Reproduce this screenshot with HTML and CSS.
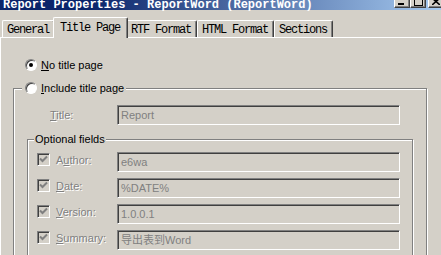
FILE: index.html
```html
<!DOCTYPE html>
<html lang="en">
<head>
    <meta charset="UTF-8">
    <title>Report Properties</title>
    <link rel="stylesheet" href="styles.css">
</head>
<body>

<div class="titlebar">
    <span class="caption">Report Properties - ReportWord (ReportWord)</span>
    <div class="caption-buttons">
        <span class="cap-btn">
            <svg width="8" height="8" viewBox="0 0 8 8"><rect x="0" y="6" width="6" height="2" fill="#000"/></svg>
        </span>
        <span class="cap-btn">
            <svg width="9" height="9" viewBox="0 0 9 9"><rect x="0.5" y="0.5" width="8" height="8" fill="none" stroke="#000"/><rect x="0" y="0" width="9" height="2" fill="#000"/></svg>
        </span>
        <span class="cap-btn cap-close">
            <svg width="8" height="7" viewBox="0 0 8 7"><path d="M0 0 L8 7 M8 0 L0 7" stroke="#000" stroke-width="1.6"/></svg>
        </span>
    </div>
</div>

<div class="tabs">
    <span class="tab">General</span>
    <span class="tab active">Title Page</span>
    <span class="tab">RTF Format</span>
    <span class="tab">HTML Format</span>
    <span class="tab">Sections</span>
</div>

<div class="panel">
    <label class="radio-row">
        <span class="radio checked"></span>
        <span><u>N</u>o title page</span>
    </label>

    <div class="group outer">
        <label class="radio-row group-label">
            <span class="radio"></span>
            <span><u>I</u>nclude title page</span>
        </label>

        <div class="title-row">
            <span class="dis-label"><u>T</u>itle:</span>
            <span class="edit">Report</span>
        </div>

        <div class="group optional">
            <span class="group-label plain">Optional fields</span>

            <div class="field-row">
                <span class="check"><svg width="9" height="9" viewBox="0 0 9 9"><path d="M1 3.5 L3.5 6 L8 1.5" fill="none" stroke="#808080" stroke-width="2"/></svg></span>
                <span class="dis-label">A<u>u</u>thor:</span>
                <span class="edit">e6wa</span>
            </div>
            <div class="field-row">
                <span class="check"><svg width="9" height="9" viewBox="0 0 9 9"><path d="M1 3.5 L3.5 6 L8 1.5" fill="none" stroke="#808080" stroke-width="2"/></svg></span>
                <span class="dis-label"><u>D</u>ate:</span>
                <span class="edit">%DATE%</span>
            </div>
            <div class="field-row">
                <span class="check"><svg width="9" height="9" viewBox="0 0 9 9"><path d="M1 3.5 L3.5 6 L8 1.5" fill="none" stroke="#808080" stroke-width="2"/></svg></span>
                <span class="dis-label"><u>V</u>ersion:</span>
                <span class="edit">1.0.0.1</span>
            </div>
            <div class="field-row">
                <span class="check"><svg width="9" height="9" viewBox="0 0 9 9"><path d="M1 3.5 L3.5 6 L8 1.5" fill="none" stroke="#808080" stroke-width="2"/></svg></span>
                <span class="dis-label"><u>S</u>ummary:</span>
                <span class="edit">导出表到Word</span>
            </div>
        </div>
    </div>
</div>

</body>
</html>
```

FILE: styles.css
```css
body {
    margin: 0;
    width: 441px;
    height: 255px;
    overflow: hidden;
    background-color: #d4d0c8;
    font-family: "Liberation Sans", "Noto Sans CJK SC", sans-serif;
    font-size: 11px;
    color: #000;
}

/* title bar, top of it is cut off */
.titlebar {
    height: 18px;
    margin-top: -8px;
    display: flex;
    justify-content: space-between;
    background: linear-gradient(to right, #0a246a 0%, #0a246a 20%, #a6caf0 100%);
}

.titlebar .caption {
    padding: 6px 0 0 3px;
    line-height: 14px;
    color: white;
    font-family: "Liberation Mono", monospace;
    font-size: 12px;
    font-weight: bold;
    white-space: nowrap;
}

.caption-buttons {
    display: flex;
    padding-top: 2px;
    margin-right: -3px;
}

.cap-btn {
    width: 14px;
    height: 12px;
    display: flex;
    align-items: center;
    justify-content: center;
    background-color: #d4d0c8;
    border: 1px solid;
    border-color: #fff #404040 #404040 #fff;
    box-shadow: inset -1px -1px 0 #808080;
}

.cap-close {
    margin-left: 2px;
}

/* tab strip */
.tabs {
    display: flex;
    align-items: flex-end;
    height: 20px;
    margin-top: 7px;
    padding-left: 2px;
}

.tab {
    height: 14px;
    padding: 2px 5px 0 4px;
    line-height: 14px;
    font-family: "Liberation Mono", monospace;
    font-size: 12px;
    letter-spacing: -1.2px;
    white-space: nowrap;
    border: 1px solid;
    border-bottom: none;
    border-color: #fff #404040 #fff #fff;
    border-radius: 2px 2px 0 0;
    box-shadow: inset -1px 0 0 #808080;
}

.tab.active {
    position: relative;
    height: 17px;
    padding: 3px 7px 0 6px;
    margin: 0 -2px -1px -2px;
    background-color: #d4d0c8;
    z-index: 1;
}

/* tab page */
.panel {
    border-top: 1px solid #fff;
    border-left: 1px solid #fff;
    padding: 20px 0 0 12px;
}

.radio-row {
    display: flex;
    align-items: center;
    height: 14px;
    padding-left: 12px;
}

.radio {
    position: relative;
    width: 10px;
    height: 10px;
    margin-right: 4px;
    border-radius: 50%;
    border: 1px solid;
    border-color: #808080 #fff #fff #808080;
    box-shadow: inset 1px 1px 0 #404040;
    background-color: #fff;
}

.radio.checked::after {
    content: "";
    position: absolute;
    top: 3px;
    left: 3px;
    width: 4px;
    height: 4px;
    border-radius: 50%;
    background-color: #000;
}

/* etched group boxes */
.group {
    position: relative;
    border: 1px solid #808080;
    box-shadow: inset 1px 1px 0 #fff, 1px 1px 0 #fff;
}

.group.outer {
    width: 414px;
    box-sizing: border-box;
    margin-top: 16px;
    padding-top: 16px;
    height: 200px;
}

.group-label {
    position: absolute;
    top: -8px;
    left: 8px;
    padding: 0 2px 0 3px;
    background-color: #d4d0c8;
}

.group-label.plain {
    top: -7px;
    left: 6px;
    padding: 0 1px 0 1px;
    line-height: 13px;
}

.title-row {
    display: grid;
    grid-template-columns: 67px 283px;
    align-items: center;
    padding-left: 36px;
}

.group.optional {
    margin: 14px 13px 0 13px;
    padding: 12px 0 20px 9px;
    display: flex;
    flex-direction: column;
    gap: 6px;
}

.field-row {
    display: grid;
    grid-template-columns: 13px 55px 283px;
    column-gap: 6px;
    align-items: start;
}

.check {
    width: 11px;
    height: 11px;
    margin-top: 1px;
    display: flex;
    align-items: center;
    justify-content: center;
    border: 1px solid;
    border-color: #808080 #fff #fff #808080;
    box-shadow: inset 1px 1px 0 #404040;
    background-color: #d4d0c8;
}

.field-row .dis-label {
    margin-top: 1px;
    line-height: 14px;
}

.field-row .edit {
    grid-column: 3;
}

.dis-label {
    color: #808080;
    text-shadow: 1px 1px 0 #fff;
    white-space: nowrap;
}

.edit {
    height: 18px;
    line-height: 18px;
    padding-left: 3px;
    color: #808080;
    border: 1px solid;
    border-color: #808080 #fff #fff #808080;
    box-shadow: inset 1px 1px 0 #404040;
    white-space: nowrap;
    overflow: hidden;
}
```
